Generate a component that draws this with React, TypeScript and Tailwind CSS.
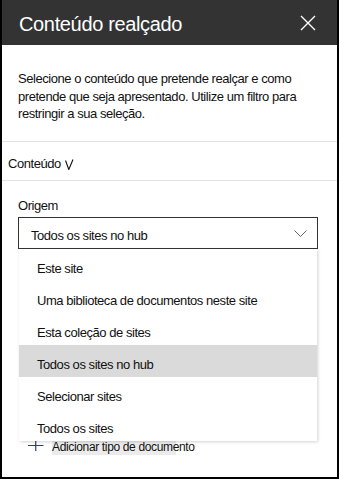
import React from 'react';

const options = [
  'Este site',
  'Uma biblioteca de documentos neste site',
  'Esta coleção de sites',
  'Todos os sites no hub',
  'Selecionar sites',
  'Todos os sites',
];

const selected = 'Todos os sites no hub';

const CloseIcon: React.FC = () => (
  <svg width="16" height="16" viewBox="0 0 16 16" fill="none">
    <path d="M1 1L15 15M15 1L1 15" stroke="#ffffff" strokeWidth="1.4" />
  </svg>
);

const Chevron: React.FC = () => (
  <svg width="13" height="7" viewBox="0 0 13 7" fill="none">
    <path d="M0.5 0.5L6.5 6.5L12.5 0.5" stroke="#666666" strokeWidth="1" />
  </svg>
);

const CheckV: React.FC = () => (
  <svg width="9" height="11" viewBox="0 0 9 11" fill="none" className="ml-[4px] mt-[1px]">
    <path d="M0.5 1.5L3.8 10.5L8 0.5" stroke="#111111" strokeWidth="1.1" />
  </svg>
);

const PlusIcon: React.FC = () => (
  <svg width="16" height="16" viewBox="0 0 16 16" fill="none">
    <path d="M0 6.5H15.5M7.75 0V12" stroke="#2b3990" strokeWidth="1.2" />
  </svg>
);

export default function App() {
  return (
    <div className="w-[339px] h-[479px] bg-white border-x-2 border-b-2 border-black font-['Liberation_Sans',Arial,sans-serif] text-[#111111] overflow-hidden">
      <div className="h-[45px] bg-[#333333] flex items-center justify-between pl-[17px] pr-[21px]">
        <span className="text-white text-[20px] tracking-[-0.35px] pt-[2px]">Conteúdo realçado</span>
        <CloseIcon />
      </div>

      <div className="pt-[25px] pb-[18px] pl-4 text-[13px] leading-[17.5px] tracking-[-0.45px] border-b border-[#e3e3e3]">
        Selecione o conteúdo que pretende realçar e como
        <br />
        pretende que seja apresentado. Utilize um filtro para
        <br />
        restringir a sua seleção.
      </div>

      <div className="pt-[13.5px] pb-[6.5px] pl-[6px] flex items-center text-[13px] leading-[18px] tracking-[-0.45px] border-b border-[#e3e3e3]">
        <span>Conteúdo</span>
        <CheckV />
      </div>

      <div className="pt-[16.5px] pl-4">
        <div className="text-[13px] leading-[18px] tracking-[-0.45px]">Origem</div>
        <div className="relative mt-[2px] w-[300px]">
          <div className="h-[32px] border border-[#333333] flex items-center justify-between pl-[12px] pr-[10px] pt-[5px]">
            <span className="text-[13px] leading-[18px] tracking-[-0.45px]">{selected}</span>
            <span className="-mt-[5px]">
              <Chevron />
            </span>
          </div>
          <div className="absolute left-[1px] right-[1px] top-full bg-white shadow-[1px_1px_3px_rgba(0,0,0,0.18)] z-10">
            {options.map((o) => (
              <div
                key={o}
                className={`h-[32px] flex items-center pl-[18px] pt-[7px] text-[13px] leading-[18px] tracking-[-0.45px] ${
                  o === selected ? 'bg-[#dadada]' : ''
                }`}
              >
                {o}
              </div>
            ))}
          </div>
        </div>

        <div className="mt-[190px] ml-[10px] flex items-center gap-[8px]">
          <PlusIcon />
          <span className="inline-block h-[16px] leading-[16px] text-[12px] tracking-[-0.35px] bg-[linear-gradient(to_right,#ebebeb_124px,transparent_124px)]">
            Adicionar tipo de documento
          </span>
        </div>
      </div>
    </div>
  );
}
